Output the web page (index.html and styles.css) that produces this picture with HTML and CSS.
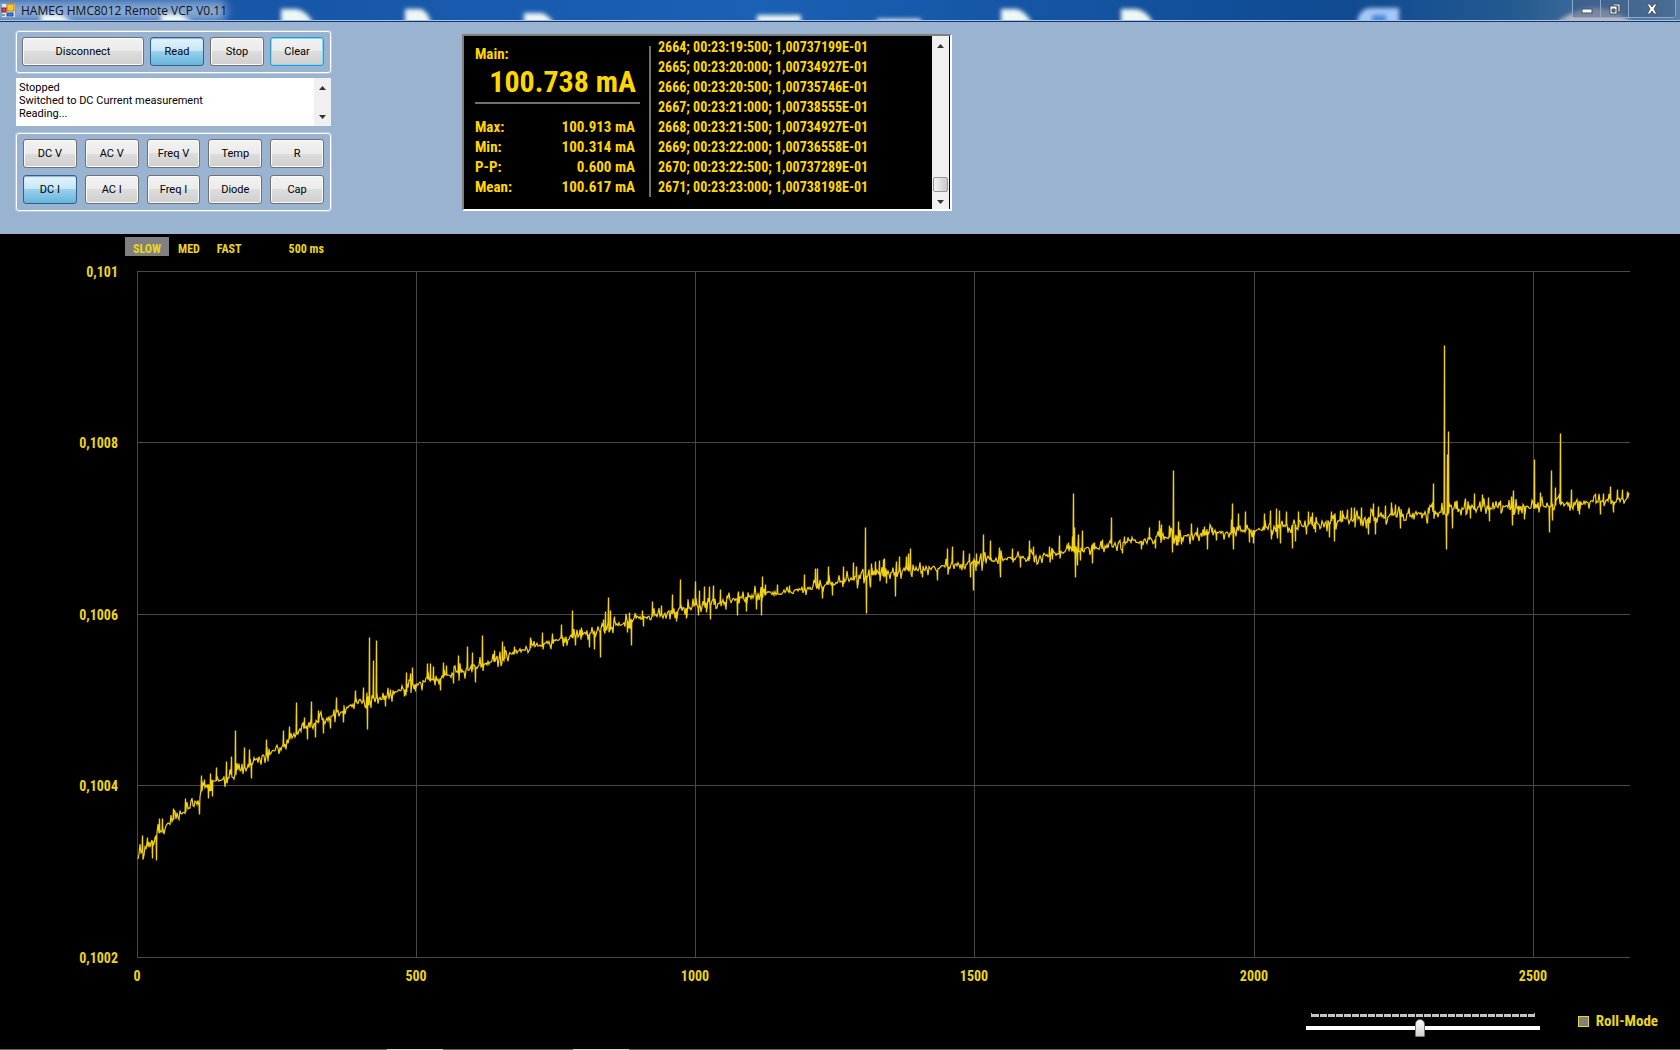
FILE: index.html
```html
<!DOCTYPE html>
<html lang="en">
<head>
    <meta charset="UTF-8">
    <meta name="viewport" content="width=device-width, initial-scale=1.0">
    <title>HAMEG HMC8012 Remote VCP V0.11</title>
    <link rel="stylesheet" href="styles.css">
</head>
<body>
    <header class="titlebar">
        <svg class="desktop" width="1680" height="20" aria-hidden="true">
            <defs>
                <filter id="soft" x="-20%" y="-50%" width="140%" height="200%"><feGaussianBlur stdDeviation="2"/></filter>
                <filter id="glow" x="-20%" y="-50%" width="140%" height="200%"><feGaussianBlur stdDeviation="5"/></filter>
            </defs>
            <rect x="-10" y="1" width="236" height="20" rx="6" fill="#9fbbe0" opacity=".8" filter="url(#glow)"/>
            <g filter="url(#soft)" fill="#eef7f4">
                <path d="M41 24V14h20l13 10z"/>
                <path d="M161 24V14h20l13 10z"/>
                <path d="M281 24V9h16q12 3 16 15z"/>
                <path d="M405 24V9h16q8 3 10 15z"/>
                <path d="M524 24V13h18q8 3 12 11z"/>
                <path d="M757 24v-9h44v9z"/>
                <path d="M877 24v-5h44v5z"/>
                <path d="M1001 24V9h16q10 3 15 15z"/>
                <path d="M1121 24V9h16q12 3 16 15z"/>
                <path d="M1357 24q1-14 12-16h30v16z" fill="#a5c8f6"/>
                <path d="M1552 26q44-36 84 0z" fill="#b9b6bf"/>
            </g>
            <path d="M1372 24v-9h14v9z" fill="#4a86dc" filter="url(#soft)"/>
        </svg>
        <svg class="app-icon" width="15" height="15" viewBox="0 0 15 15" aria-hidden="true">
            <rect x="0.500" y="0.500" width="14" height="14" fill="#dfe5ee" stroke="#8b98ad"/>
            <rect x="6" y="1" width="7" height="7" fill="#f7c52f" stroke="#b9820d"/>
            <rect x="1" y="5" width="4" height="4" fill="#d84a34" stroke="#8e1f14"/>
            <rect x="6" y="10" width="6" height="3" fill="#3f7ddb" stroke="#1e4c9b"/>
            <rect x="1" y="11" width="3" height="2" fill="#8a93a0"/>
        </svg>
        <h1 class="title">HAMEG HMC8012 Remote VCP V0.11</h1>
        <div class="window-buttons">
            <button type="button" aria-label="Minimize"><svg width="12" height="12"><rect x="1" y="6" width="10" height="4" fill="#fff" stroke="#45536b"/></svg></button>
            <button type="button" aria-label="Restore"><svg width="12" height="12"><path d="M4 1h7v8H9V3H4z" fill="#fff" stroke="#45536b"/><path d="M1 3h7v8H1zM3 6v3h3V6z" fill="#fff" stroke="#45536b" fill-rule="evenodd"/></svg></button>
            <button type="button" class="close" aria-label="Close"><svg width="12" height="12"><path d="M1 1h3l2 3 2-3h3L8 6l3 5H8L6 8l-2 3H1l3-5z" fill="#fff" stroke="#45536b"/></svg></button>
        </div>
    </header>

    <section class="panel">
        <div class="controls">
            <div class="group commands">
                <button type="button" class="btn wide">Disconnect</button>
                <button type="button" class="btn active">Read</button>
                <button type="button" class="btn">Stop</button>
                <button type="button" class="btn focused">Clear</button>
            </div>
            <div class="log">
                <textarea readonly aria-label="Log">Stopped
Switched to DC Current measurement
Reading...</textarea>
                <div class="scrollbar">
                    <svg width="7" height="4"><path d="M0 4l3.500-4L7 4z"/></svg>
                    <svg width="7" height="4"><path d="M0 0l3.500 4L7 0z"/></svg>
                </div>
            </div>
            <div class="group modes">
                <button type="button" class="btn">DC V</button>
                <button type="button" class="btn">AC V</button>
                <button type="button" class="btn">Freq V</button>
                <button type="button" class="btn">Temp</button>
                <button type="button" class="btn">R</button>
                <button type="button" class="btn active">DC I</button>
                <button type="button" class="btn">AC I</button>
                <button type="button" class="btn">Freq I</button>
                <button type="button" class="btn">Diode</button>
                <button type="button" class="btn">Cap</button>
            </div>
        </div>

        <div class="display">
            <div class="readout">
                <div class="caption">Main:</div>
                <div class="main-value">100.738 mA</div>
                <dl class="stats">
                    <dt>Max:</dt><dd>100.913 mA</dd>
                    <dt>Min:</dt><dd>100.314 mA</dd>
                    <dt>P-P:</dt><dd>0.600 mA</dd>
                    <dt>Mean:</dt><dd>100.617 mA</dd>
                </dl>
            </div>
            <ul class="samples">
                <li>2664; 00:23:19:500; 1,00737199E-01</li>
                <li>2665; 00:23:20:000; 1,00734927E-01</li>
                <li>2666; 00:23:20:500; 1,00735746E-01</li>
                <li>2667; 00:23:21:000; 1,00738555E-01</li>
                <li>2668; 00:23:21:500; 1,00734927E-01</li>
                <li>2669; 00:23:22:000; 1,00736558E-01</li>
                <li>2670; 00:23:22:500; 1,00737289E-01</li>
                <li>2671; 00:23:23:000; 1,00738198E-01</li>
            </ul>
            <div class="scrollbar">
                <svg width="7" height="4"><path d="M0 4l3.500-4L7 4z"/></svg>
                <span class="thumb"></span>
                <svg width="7" height="4"><path d="M0 0l3.500 4L7 0z"/></svg>
            </div>
        </div>
    </section>

    <main class="scope">
        <div class="rates">
            <button type="button" class="rate selected">SLOW</button>
            <button type="button" class="rate">MED</button>
            <button type="button" class="rate">FAST</button>
            <span class="interval">500 ms</span>
        </div>
        <svg id="chart" class="chart"></svg>
        <div class="footer">
            <div class="zoom">
                <div class="ticks"></div>
                <input type="range" min="0" max="37" value="18" aria-label="Zoom">
            </div>
            <label class="roll"><input type="checkbox"> Roll-Mode</label>
        </div>
    </main>
    <div class="taskbar"></div>

    <script src="script.js"></script>
</body>
</html>
```

FILE: styles.css
```css
* {
    box-sizing: border-box;
}
body {
    margin: 0;
    height: 100vh;
    display: flex;
    flex-direction: column;
    overflow: hidden;
    background-color: #000;
    font-family: Roboto, "Liberation Sans", Arial, sans-serif;
    font-size: 11px;
}
button {
    font: inherit;
    padding: 0;
}

/* title bar */
.titlebar {
    position: relative;
    display: flex;
    flex: none;
    align-items: center;
    height: 22px;
    padding: 0 4px 0 1px;
    overflow: hidden;
    background: linear-gradient(to right, #2a5fa8, #1756a8 15%, #1a60b4 45%, #0f4a92 80%, #245a90 90%, #5c80a6);
    border-bottom: 1px solid #12366e;
    box-shadow: inset 0 -1px #a9c4e4;
}
.desktop {
    position: absolute;
    left: 0;
    top: 0;
}
.app-icon, .title, .window-buttons {
    position: relative;
}
.title {
    flex: 1;
    margin: 0 0 0 5px;
    font-family: "Open Sans", "Noto Sans", sans-serif;
    font-size: 12px;
    font-weight: 400;
    line-height: 20px;
    color: #111;
}
.window-buttons {
    display: flex;
    align-self: flex-start;
    height: 18px;
    border: 1px solid #8fa8c4;
    border-top: 0;
    border-radius: 0 0 4px 4px;
}
.window-buttons button {
    display: flex;
    align-items: center;
    justify-content: center;
    width: 28px;
    border: 0;
    border-right: 1px solid #8fa8c4;
    background: rgba(60, 90, 130, 0.5);
}
.window-buttons .close {
    width: 46px;
    border-right: 0;
}

/* controls */
.panel {
    display: flex;
    flex: none;
    align-items: flex-start;
    gap: 131px;
    padding: 9px 16px 23px;
    background-color: #9ab3d1;
}
.controls {
    display: flex;
    flex-direction: column;
    gap: 5px;
    width: 315px;
}
.group {
    border: 1px solid #fff;
    border-radius: 3px;
    box-shadow: 0 0 0 1px rgba(255, 255, 255, 0.3);
}
.commands {
    display: flex;
    gap: 6px;
    padding: 5px 6px 6px 5px;
}
.modes {
    display: grid;
    grid-template-columns: repeat(5, 1fr);
    gap: 7px 8px;
    margin-top: 2px;
    padding: 5px 6px 6px;
}
.btn {
    flex: 1;
    height: 29px;
    border: 1px solid #707070;
    border-radius: 3px;
    box-shadow: inset 0 0 0 1px #fbfbfb;
    background: linear-gradient(#f2f2f2, #ebebeb 50%, #dddddd 50%, #cfcfcf);
    color: #000;
}
.btn.wide {
    flex: none;
    width: 122px;
}
.btn.active {
    border-color: #2c628b;
    box-shadow: inset 0 1px 1px #8fb4cc;
    background: linear-gradient(#e5f4fc, #c4e5f6 50%, #98d1ef 50%, #68b3db);
}
.btn.focused {
    border-color: #2a9bcb;
    box-shadow: inset 0 0 0 1px #7fdcf5;
}
.log {
    display: flex;
    height: 48px;
    background-color: #fff;
}
.log textarea {
    flex: 1;
    padding: 3px;
    border: 0;
    resize: none;
    outline: none;
    overflow: hidden;
    font: inherit;
    line-height: 13px;
    color: #000;
}
.scrollbar {
    display: flex;
    flex-direction: column;
    align-items: center;
    justify-content: space-between;
    width: 17px;
    padding: 8px 0 7px;
    background-color: #f0f0f0;
    fill: #333;
}

/* measurement display */
.display {
    display: flex;
    width: 490px;
    height: 177px;
    margin-top: 3px;
    border: 2px solid #fff;
    border-top-color: #808080;
    border-left-color: #808080;
    background-color: #000;
    color: #ffd700;
    font-family: "Roboto Condensed", "Liberation Sans", Arial, sans-serif;
    font-weight: 700;
    font-size: 15px;
    line-height: 20px;
}
.readout {
    width: 187px;
    margin: 10px 0 12px;
    padding-left: 11px;
    padding-right: 9px;
    border-right: 2px solid #707070;
}
.caption {
    line-height: 16px;
}
.main-value {
    padding-right: 4px;
    border-bottom: 2px solid #707070;
    font-size: 30px;
    line-height: 40px;
    text-align: right;
}
.stats {
    display: grid;
    grid-template-columns: auto 1fr;
    margin: 13px 0 0;
}
.stats dd {
    margin: 0;
    padding-right: 5px;
    text-align: right;
}
.samples {
    flex: 1;
    margin: 0;
    padding: 1px 0 0 7px;
    list-style: none;
    font-size: 14px;
}
.display .scrollbar {
    margin-right: 1px;
}
.display .scrollbar svg:last-child {
    margin-bottom: -2px;
}
.thumb {
    width: 15px;
    height: 15px;
    margin-top: auto;
    margin-bottom: 8px;
    border: 1px solid #979797;
    border-radius: 2px;
    background: linear-gradient(to right, #f5f5f5, #c9c9c9);
}

/* chart area */
.scope {
    display: flex;
    flex: 1;
    flex-direction: column;
    min-height: 0;
    color: #ead61f;
    font-family: "Roboto Condensed", "Liberation Sans", Arial, sans-serif;
    font-weight: 700;
}
.rates {
    display: flex;
    gap: 1px;
    align-items: center;
    padding: 3px 0 0 125px;
    font-size: 12px;
}
.rate {
    height: 19px;
    padding: 5px 8px 0;
    border: 0;
    background: none;
    color: inherit;
    line-height: 14px;
}
.rate.selected {
    background-color: #808080;
}
.interval {
    margin-left: 38px;
    padding-top: 5px;
    line-height: 14px;
}
.chart {
    flex: 1;
    width: 100%;
    min-height: 0;
    font-size: 14px;
    fill: #ead61f;
}
.grid {
    stroke: #484848;
    shape-rendering: crispEdges;
}
.trace {
    fill: none;
    stroke: #f2d012;
    stroke-width: 1.2;
}
.footer {
    display: flex;
    align-items: center;
    justify-content: flex-end;
    gap: 38px;
    height: 56px;
    padding-right: 22px;
}
.zoom {
    width: 234px;
    padding-top: 8px;
}
.ticks {
    height: 4px;
    margin: 0 5px;
    border-left: 1px solid #c4c4c4;
    border-right: 1px solid #c4c4c4;
    background: repeating-linear-gradient(to right, #c4c4c4 0, #c4c4c4 7px, #000 7px, #000 8px) 0 100% / 100% 3px no-repeat;
}
.zoom input {
    display: block;
    width: 100%;
    height: 18px;
    margin: 2px 0 0;
    appearance: none;
    background: linear-gradient(#fff, #fff) 0 50% / 100% 4px no-repeat;
}
.zoom input::-webkit-slider-thumb {
    appearance: none;
    width: 10px;
    height: 18px;
    border: 1px solid #777;
    border-radius: 5px 5px 1px 1px;
    background: linear-gradient(#fff, #d0d0d0);
}
.roll {
    display: flex;
    align-items: center;
    gap: 7px;
    font-size: 15px;
}
.roll input {
    width: 11px;
    height: 11px;
    margin: 0;
    appearance: none;
    border: 1px solid #ead61f;
    background-color: #808080;
}
.taskbar {
    flex: none;
    height: 1px;
    background: linear-gradient(to right, #666 387px, #ddd 387px, #ddd 443px, #666 443px, #666 573px, #ddd 573px, #ddd 629px, #666 629px);
}
```

FILE: script.js
```js
const NS = 'http://www.w3.org/2000/svg';
const chart = document.getElementById('chart');

const area = { x: 137, y: 271, w: 1493, h: 686 };

const trend = [
    [138, 854], [151, 843], [159, 833], [173, 820], [198, 802], [203, 787], [217, 781], [233, 775],
    [250, 763], [270, 753], [293, 737], [303, 728], [323, 720], [350, 707], [360, 701], [387, 697],
    [400, 691], [417, 684], [447, 676], [473, 667], [493, 662], [513, 653], [533, 646], [567, 638],
    [600, 630], [623, 623], [633, 620], [667, 613], [680, 610], [700, 606], [733, 599], [760, 595],
    [783, 592], [817, 587], [850, 579], [867, 576], [900, 572], [933, 568], [973, 563], [1013, 558],
    [1043, 557], [1067, 551], [1100, 548], [1117, 544], [1150, 539], [1183, 536], [1217, 533],
    [1250, 530], [1280, 527], [1330, 522], [1380, 517], [1413, 514], [1443, 512], [1453, 510],
    [1480, 507], [1513, 507], [1547, 507], [1573, 503], [1613, 501], [1629, 498]
];

const peaks = [
    [142, 836], [147, 838], [152, 858], [156, 860], [159, 819], [162, 819], [173, 809], [185, 799], [199, 814],
    [201, 776], [204, 780], [208, 798], [210, 774], [212, 796], [216, 768], [226, 762], [231, 757], [235, 731],
    [244, 748], [249, 750], [251, 778], [266, 740], [283, 731], [289, 727], [296, 703], [304, 718],
    [307, 739], [311, 702], [315, 737], [318, 711], [323, 733], [330, 728], [336, 698], [343, 722],
    [355, 691], [363, 688], [367, 729], [369, 638], [373, 661], [376, 641], [385, 706], [390, 690],
    [404, 696], [406, 673], [410, 674], [412, 668], [415, 691], [427, 664], [430, 664], [433, 667], [440, 690],
    [443, 663], [446, 666], [453, 683], [458, 656], [467, 647], [472, 653], [475, 682], [482, 636],
    [494, 651], [502, 642], [504, 647], [514, 647], [530, 638], [542, 633], [552, 634], [561, 625],
    [563, 646], [572, 611], [575, 645], [581, 628], [589, 647], [594, 649], [600, 657], [603, 620],
    [605, 612], [608, 598], [610, 611], [614, 617], [627, 632], [629, 613], [631, 645], [635, 614],
    [642, 611], [643, 626], [652, 602], [661, 606], [672, 595], [676, 621], [680, 580], [686, 618],
    [695, 582], [698, 615], [699, 591], [704, 587], [706, 612], [709, 587], [710, 619], [713, 586],
    [720, 590], [737, 615], [738, 592], [746, 611], [756, 609], [761, 615], [762, 577], [765, 585],
    [777, 585], [789, 586], [804, 575], [815, 569], [817, 569], [822, 598], [828, 567], [832, 595],
    [843, 567], [853, 563], [856, 567], [857, 588], [865, 528], [866, 613], [870, 587], [871, 564],
    [875, 562], [879, 561], [883, 560], [884, 559], [886, 583], [895, 596], [896, 562], [899, 557],
    [906, 557], [908, 554], [910, 549], [922, 577], [937, 580], [947, 549], [952, 547], [963, 551],
    [969, 554], [970, 577], [973, 590], [976, 554], [983, 535], [990, 541], [999, 548], [1000, 577],
    [1012, 549], [1020, 567], [1029, 541], [1033, 547], [1034, 562], [1049, 547], [1052, 559],
    [1059, 536], [1068, 543], [1072, 537], [1073, 494], [1074, 528], [1075, 577], [1077, 565],
    [1078, 535], [1080, 560], [1082, 531], [1092, 563], [1094, 543], [1102, 540], [1111, 518],
    [1122, 553], [1124, 537], [1141, 549], [1149, 528], [1155, 548], [1159, 521], [1161, 525],
    [1169, 526], [1172, 552], [1173, 471], [1176, 545], [1178, 522], [1181, 544], [1191, 524],
    [1197, 528], [1204, 527], [1207, 549], [1212, 528], [1216, 540], [1231, 520], [1232, 504],
    [1233, 549], [1238, 514], [1245, 512], [1249, 542], [1253, 543], [1264, 514], [1270, 511],
    [1271, 539], [1276, 509], [1277, 538], [1279, 511], [1280, 543], [1286, 512], [1292, 548],
    [1295, 541], [1298, 512], [1306, 534], [1308, 512], [1312, 513], [1315, 532], [1329, 537],
    [1331, 512], [1334, 541], [1340, 511], [1342, 511], [1347, 510], [1351, 508], [1354, 508],
    [1361, 508], [1366, 528], [1368, 534], [1373, 504], [1375, 534], [1378, 507], [1385, 506],
    [1391, 503], [1395, 505], [1400, 528], [1408, 510], [1427, 523], [1428, 508], [1433, 484],
    [1444, 346], [1446, 549], [1447, 455], [1448, 432], [1452, 528], [1456, 502], [1465, 499],
    [1470, 518], [1474, 494], [1482, 495], [1488, 498], [1489, 521], [1500, 501], [1511, 497],
    [1512, 525], [1513, 491], [1518, 514], [1524, 519], [1534, 460], [1540, 493], [1549, 532],
    [1551, 471], [1552, 520], [1555, 488], [1560, 434], [1571, 490], [1579, 514], [1595, 494],
    [1600, 514], [1603, 494], [1610, 487], [1613, 512], [1617, 490], [1622, 490], [1627, 492]
];

function level(x) {
    let i = 1;
    while (i < trend.length - 1 && trend[i][0] < x) i++;
    const [x0, y0] = trend[i - 1];
    const [x1, y1] = trend[i];
    return y0 + (y1 - y0) * (x - x0) / (x1 - x0);
}

function tracePoints() {
    const spikes = new Map(peaks);
    const points = [];
    let seed = 8012;
    const rand = () => {
        seed = (seed * 16807) % 2147483647;
        return seed / 2147483647;
    };
    for (let x = 138; x < 1630; x++) {
        // spikes come in bursts, so it is noisier close to one
        const busy = spikes.has(x - 2) || spikes.has(x - 1) || spikes.has(x + 1) || spikes.has(x + 2);
        let noise = (rand() - 0.5) * 4;
        if (rand() > (busy ? 0.3 : 0.8)) noise += (rand() - 0.5) * 17;
        points.push([x, level(x) + noise]);
        if (spikes.has(x)) {
            points.push([x + 0.4, spikes.get(x)]);
            points.push([x + 0.6, spikes.get(x)]);
            points.push([x + 0.8, level(x) + noise / 2]);
        }
    }
    return points;
}

function add(name, attrs, text) {
    const el = document.createElementNS(NS, name);
    Object.keys(attrs).forEach(key => el.setAttribute(key, attrs[key]));
    if (text) el.textContent = text;
    chart.appendChild(el);
}

function draw() {
    chart.innerHTML = '';
    const left = 137, top = 15;
    const width = chart.clientWidth - left - 50;
    const height = chart.clientHeight - top - 36;

    ['0,101', '0,1008', '0,1006', '0,1004', '0,1002'].forEach((label, i) => {
        const y = Math.floor(top + height * i / 4);
        add('line', { class: 'grid', x1: left, x2: left + width, y1: y, y2: y });
        add('text', { x: left - 19, y: y + 6, 'text-anchor': 'end' }, label);
    });
    [0, 500, 1000, 1500, 2000, 2500].forEach(n => {
        const x = Math.floor(left + width * n / 2673);
        add('line', { class: 'grid', x1: x, x2: x, y1: top, y2: top + height });
        add('text', { x: x, y: top + height + 24, 'text-anchor': 'middle' }, String(n));
    });

    const points = tracePoints().map(([x, y]) => {
        const px = left + (x - area.x) * width / area.w;
        const py = top + (y - area.y) * height / area.h;
        return px.toFixed(1) + ',' + py.toFixed(1);
    });
    add('polyline', { class: 'trace', points: points.join(' ') });
}

draw();
window.addEventListener('resize', draw);
```
